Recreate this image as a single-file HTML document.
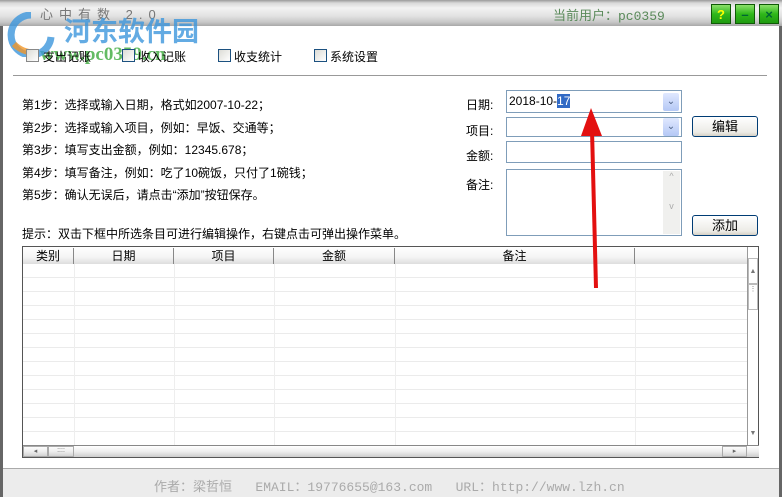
<!DOCTYPE html>
<html><head><meta charset="utf-8"><style>
*{margin:0;padding:0;box-sizing:border-box}
body{width:782px;height:497px;position:relative;overflow:hidden;background:#fff;font-family:"Liberation Sans","Noto Sans CJK SC","WenQuanYi Zen Hei",sans-serif;font-size:12px;color:#000}
.abs{position:absolute}
#title{left:0;top:0;width:782px;height:26px;background:linear-gradient(#9a9a9a 0,#d8d8d8 3px,#f2f2f2 8px,#e2e2e2 16px,#c8c8c8 22px,#a8a8a8 26px)}
.tb{width:20px;height:20px;top:4px;background:linear-gradient(#8be06a,#2fb81a 50%,#1f9a10);border:1px solid #0f5a06;text-align:center;font-weight:bold;font-size:13px;line-height:19px}
.txt{white-space:nowrap}
.cb{width:13px;height:13px;border:1px solid #1c5180;background:linear-gradient(135deg,#dcdcd6,#fff)}
.inp{border:1px solid #7f9db9;background:#fff}
.dd{width:16px;height:18px;background:linear-gradient(#e0e8ff,#b4c8f5);border-radius:2px;color:#4d6185;font-size:10px;text-align:center;line-height:18px}
.btn{width:66px;height:21px;border:1px solid #003c74;border-radius:3px;background:linear-gradient(#fff,#ecebe6 80%,#d6d0c5);text-align:center;line-height:19px;font-size:13px}
.hc{top:248px;height:16px;border-right:1px solid #888;text-align:center;line-height:16px;font-size:12px}
</style></head><body>
<div id="title" class="abs"></div>
<div class="abs txt" style="left:40px;top:4px;color:#777;font-size:13px;letter-spacing:6px">心中有数 2.0</div>
<div class="abs txt" style="left:553px;top:5px;color:#5a8a5a;font-size:13px;font-family:'Liberation Mono','Noto Sans CJK SC',monospace">当前用户：pc0359</div>
<div class="abs tb" style="left:711px;color:#ff0">?</div>
<div class="abs tb" style="left:735px;color:#063">–</div>
<div class="abs tb" style="left:759px;color:#063">×</div>
<div class="abs" style="left:0;top:26px;width:3px;height:471px;background:#666"></div>
<div class="abs" style="left:779px;top:26px;width:3px;height:471px;background:#666"></div>
<!-- watermark -->
<div class="abs txt" style="left:64px;top:10px;font-size:27px;font-weight:bold;color:rgba(60,150,220,.8)">河东软件园</div>
<div class="abs txt" style="left:40px;top:44px;font-size:19px;font-weight:bold;color:rgba(60,170,60,.8);font-family:'Liberation Serif',serif">www.pc0359.cn</div>
<svg class="abs" style="left:6px;top:12px" width="50" height="45"><path d="M25 3a20 20 0 1 0 20 22" fill="none" stroke="rgba(60,150,220,.8)" stroke-width="7"/><path d="M8 32 q10 10 24 8" fill="none" stroke="rgba(240,150,40,.8)" stroke-width="6"/></svg>
<!-- tabs -->
<div class="abs cb" style="left:26px;top:49px;border-color:#888"></div><div class="abs txt" style="left:43px;top:48px">支出记账</div>
<div class="abs cb" style="left:122px;top:49px"></div><div class="abs txt" style="left:138px;top:48px">收入记账</div>
<div class="abs cb" style="left:218px;top:49px"></div><div class="abs txt" style="left:234px;top:48px">收支统计</div>
<div class="abs cb" style="left:314px;top:49px"></div><div class="abs txt" style="left:330px;top:48px">系统设置</div>
<div class="abs" style="left:13px;top:75px;width:754px;height:1px;background:#999"></div>
<!-- steps -->
<div class="abs txt" style="left:22px;top:96px">第1步：选择或输入日期，格式如2007-10-22；</div>
<div class="abs txt" style="left:22px;top:119px">第2步：选择或输入项目，例如：早饭、交通等；</div>
<div class="abs txt" style="left:22px;top:141px">第3步：填写支出金额，例如：12345.678；</div>
<div class="abs txt" style="left:22px;top:164px">第4步：填写备注，例如：吃了10碗饭，只付了1碗钱；</div>
<div class="abs txt" style="left:22px;top:186px">第5步：确认无误后，请点击“添加”按钮保存。</div>
<div class="abs txt" style="left:22px;top:225px">提示：双击下框中所选条目可进行编辑操作，右键点击可弹出操作菜单。</div>
<!-- form -->
<div class="abs txt" style="left:466px;top:96px">日期:</div>
<div class="abs txt" style="left:466px;top:122px">项目:</div>
<div class="abs txt" style="left:466px;top:147px">金额:</div>
<div class="abs txt" style="left:466px;top:176px">备注:</div>
<div class="abs inp" style="left:506px;top:90px;width:176px;height:23px"><span class="abs txt" style="left:2px;top:3px">2018-10-<span style="background:#316ac5;color:#fff">17</span></span><div class="abs dd" style="right:2px;top:2px">⌄</div></div>
<div class="abs inp" style="left:506px;top:117px;width:176px;height:20px"><div class="abs dd" style="right:2px;top:0px;height:18px">⌄</div></div>
<div class="abs inp" style="left:506px;top:141px;width:176px;height:22px"></div>
<div class="abs inp" style="left:506px;top:169px;width:176px;height:67px"><div class="abs" style="right:1px;top:1px;width:17px;height:63px;background:#f0f0ee;color:#aaa;text-align:center;font-size:9px">^<br><br><br>v</div></div>
<div class="abs btn" style="left:692px;top:116px">编辑</div>
<div class="abs btn" style="left:692px;top:215px">添加</div>
<!-- grid -->
<div class="abs" style="left:22px;top:246px;width:737px;height:212px;border:1px solid #555;background:#fff"></div>
<div class="abs" style="left:23px;top:247px;width:724px;height:17px;background:linear-gradient(#fff,#f4f4f4 60%,#ddd)"></div>
<div class="abs hc" style="left:23px;width:51px">类别</div>
<div class="abs hc" style="left:74px;width:100px">日期</div>
<div class="abs hc" style="left:174px;width:100px">项目</div>
<div class="abs hc" style="left:274px;width:121px">金额</div>
<div class="abs hc" style="left:395px;width:240px">备注</div>
<div class="abs" style="left:23px;top:264px;width:724px;height:181px;background:repeating-linear-gradient(#fff 0,#fff 13px,#ebebeb 13px,#ebebeb 14px)"></div>
<div class="abs" style="left:74px;top:264px;width:1px;height:181px;background:#eee"></div>
<div class="abs" style="left:174px;top:264px;width:1px;height:181px;background:#eee"></div>
<div class="abs" style="left:274px;top:264px;width:1px;height:181px;background:#eee"></div>
<div class="abs" style="left:395px;top:264px;width:1px;height:181px;background:#eee"></div>
<div class="abs" style="left:635px;top:264px;width:1px;height:181px;background:#eee"></div>
<div class="abs" style="left:747px;top:247px;width:11px;height:198px;background:#fff;border-left:1px solid #999"></div>
<div class="abs" style="left:748px;top:258px;width:10px;height:26px;border:1px solid #bbb;font-size:7px;color:#777;text-align:center;line-height:26px">▲</div>
<div class="abs" style="left:748px;top:284px;width:10px;height:26px;border:1px solid #bbb;font-size:7px;color:#777;text-align:center">⋮</div>
<div class="abs" style="left:748px;top:430px;width:10px;height:14px;font-size:7px;color:#777;text-align:center">▼</div>
<div class="abs" style="left:23px;top:445px;width:736px;height:12px;background:linear-gradient(#fff,#eee,#ccc);border-top:1px solid #888"></div>
<div class="abs" style="left:23px;top:446px;width:25px;height:11px;border:1px solid #aaa;font-size:7px;color:#666;text-align:center;line-height:10px">◂</div>
<div class="abs" style="left:48px;top:446px;width:26px;height:11px;border:1px solid #aaa;font-size:7px;color:#666;text-align:center;line-height:8px">::::</div>
<div class="abs" style="left:722px;top:446px;width:25px;height:11px;border:1px solid #aaa;font-size:7px;color:#666;text-align:center;line-height:10px">▸</div>
<!-- footer -->
<div class="abs" style="left:3px;top:468px;width:776px;height:29px;background:#ececec;border-top:1px solid #aaa"></div>
<div class="abs txt" style="left:154px;top:476px;color:#aaa;font-size:13px;font-family:'Liberation Mono','Noto Sans CJK SC',monospace">作者：梁哲恒&nbsp;&nbsp;&nbsp;EMAIL：19776655@163.com&nbsp;&nbsp;&nbsp;URL：http://www.lzh.cn</div>
<!-- arrow -->
<svg class="abs" style="left:575px;top:100px" width="40" height="190"><path d="M21 188 L17 30" stroke="#e31010" stroke-width="4" fill="none"/><path d="M16 8 L6 36 L27 36 Z" fill="#e31010"/></svg>
</body></html>
